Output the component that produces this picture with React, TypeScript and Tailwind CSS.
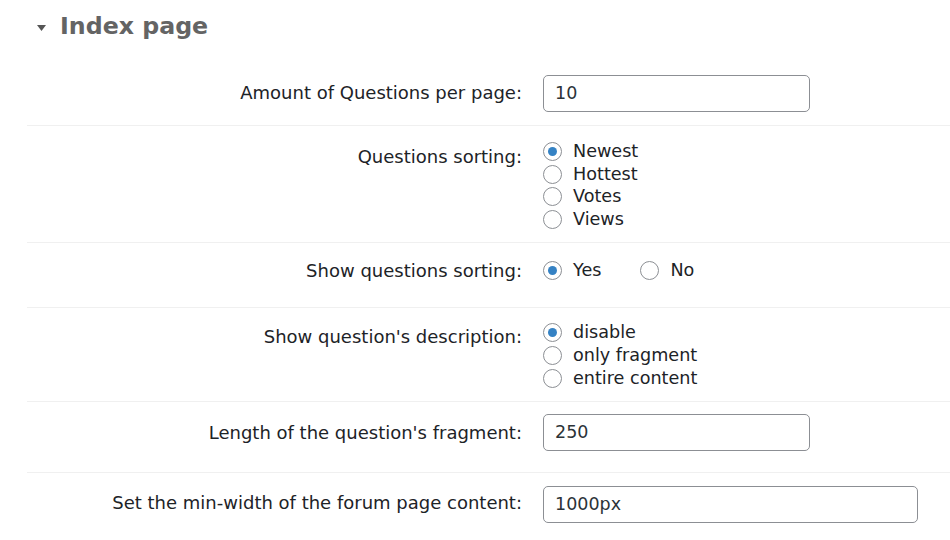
import React from 'react';

const font = { fontFamily: '"DejaVu Sans", Verdana, sans-serif' };

const Radio = ({ checked, label }: { checked?: boolean; label: string }) => (
  <label className="flex items-center h-[22.7px] text-[17.6px]">
    <span className="w-[19px] h-[19px] rounded-full border border-[#8c8f94] bg-white flex items-center justify-center shrink-0">
      {checked && <span className="w-[9px] h-[9px] rounded-full bg-[#3582c4]" />}
    </span>
    <span className="ml-[11px]">{label}</span>
  </label>
);

const TextInput = ({ value, wide }: { value: string; wide?: boolean }) => (
  <div
    className={`${wide ? 'w-[375px]' : 'w-[267px]'} h-[37px] border border-[#8c8f94] rounded-[5px] bg-white flex items-center pl-[11px] text-[17.5px] text-[#2c3338]`}
  >
    {value}
  </div>
);

const Row = ({
  label,
  labelPad,
  bodyPad,
  first,
  children,
}: {
  label: string;
  labelPad: string;
  bodyPad: string;
  first?: boolean;
  children: React.ReactNode;
}) => (
  <div className={`flex ${first ? '' : 'border-t border-[#f0f0f0]'}`}>
    <div className={`w-[506px] shrink-0 text-right pr-[11px] leading-[23px] text-[18px] whitespace-nowrap ${labelPad}`}>{label}</div>
    <div className={`pl-[10px] leading-[22.7px] ${bodyPad}`}>{children}</div>
  </div>
);

export default function App() {
  return (
    <div className="w-[950px] h-[540px] bg-white overflow-hidden text-[#1d2327] text-[16px]" style={font}>
      <div className="flex items-center h-[52px] pl-[37px] pt-[1px]">
        <svg width="9" height="6" viewBox="0 0 9 6" className="mt-[2px]">
          <polygon points="0,0 9,0 4.5,6" fill="#555" />
        </svg>
        <h2 className="ml-[14px] text-[23.7px] font-bold text-[#646464]">Index page</h2>
      </div>
      <div className="ml-[27px] mt-[8px]">
        <Row first label="Amount of Questions per page:" labelPad="pt-[21px]" bodyPad="pt-[15px] pb-[13px]">
          <TextInput value="10" />
        </Row>
        <Row label="Questions sorting:" labelPad="pt-[19px]" bodyPad="pt-[14px] pb-[11px]">
          <Radio checked label="Newest" />
          <Radio label="Hottest" />
          <Radio label="Votes" />
          <Radio label="Views" />
        </Row>
        <Row label="Show questions sorting:" labelPad="pt-[16px]" bodyPad="pt-[16px] pb-[26px]">
          <div className="flex">
            <Radio checked label="Yes" />
            <span className="w-[39px]" />
            <Radio label="No" />
          </div>
        </Row>
        <Row label="Show question's description:" labelPad="pt-[17px]" bodyPad="pt-[13px] pb-[11px]">
          <Radio checked label="disable" />
          <Radio label="only fragment" />
          <Radio label="entire content" />
        </Row>
        <Row label="Length of the question's fragment:" labelPad="pt-[19px]" bodyPad="pt-[12px] pb-[21px]">
          <TextInput value="250" />
        </Row>
        <Row label="Set the min-width of the forum page content:" labelPad="pt-[18px]" bodyPad="pt-[13px] pb-[13px]">
          <TextInput value="1000px" wide />
        </Row>
      </div>
    </div>
  );
}
